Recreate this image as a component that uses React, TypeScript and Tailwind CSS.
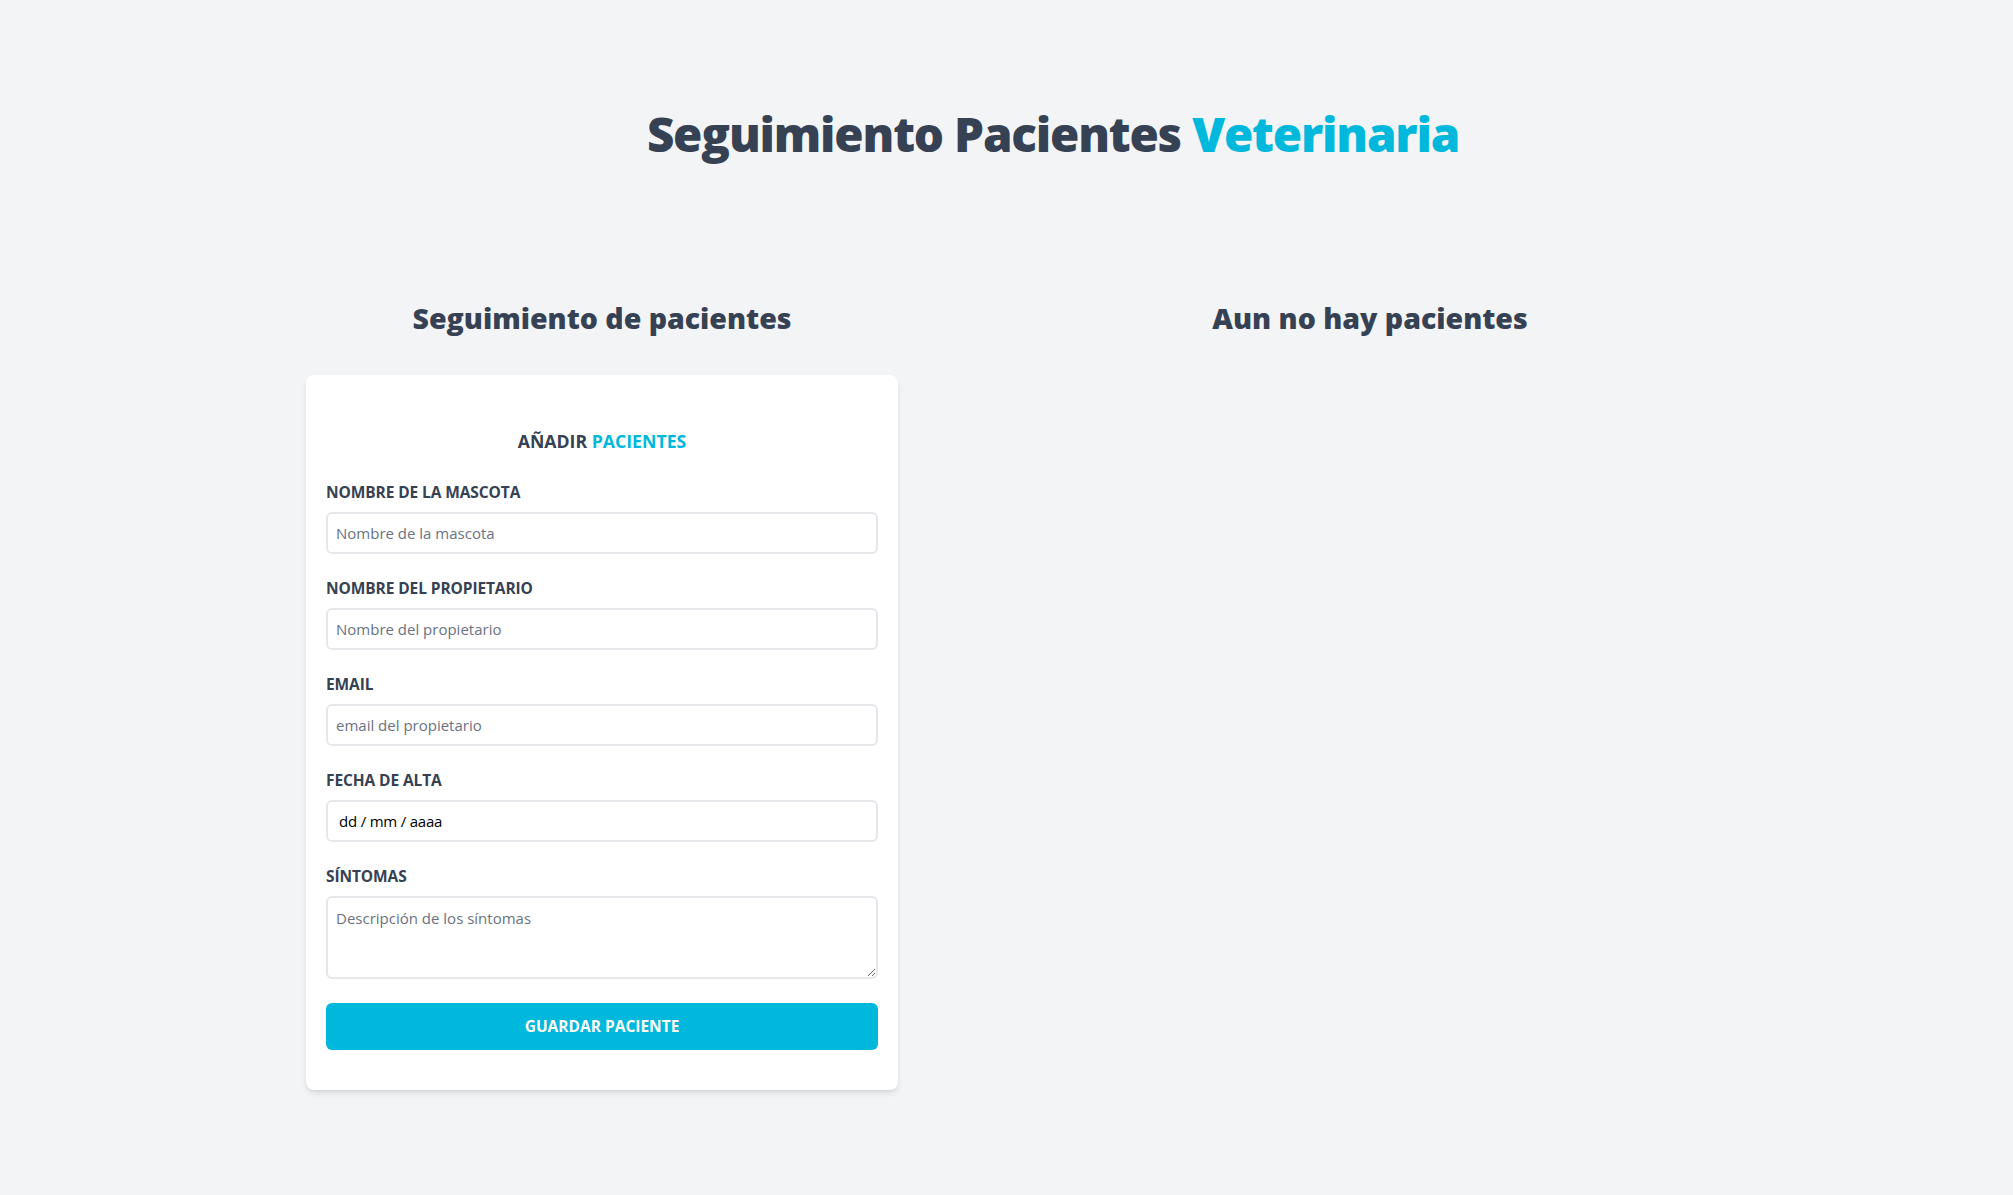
import React from "react";

const font = { fontFamily: '"Open Sans", "Noto Sans", sans-serif' };

function Field({ label, placeholder, type = "text" }: { label: string; placeholder: string; type?: string }) {
    return (
        <div className="mb-[24px]">
            <label className="block text-[15.5px] leading-[20px] font-bold uppercase text-gray-700 tracking-[-0.1px]">{label}</label>
            <input
                type={type}
                placeholder={placeholder}
                className="mt-[10px] block w-full h-[42px] border-2 border-gray-200 rounded-md px-2 text-[15px] text-gray-700 placeholder-gray-500 outline-none"
            />
        </div>
    );
}

export default function App() {
    return (
        <div className="min-h-screen w-full bg-gray-100 text-gray-700" style={font}>
            <div className="w-[1536px] ml-[306px] pt-[110px]">
                {/* Header */}
                <h1 className="pr-[42px] text-center text-[47.5px] leading-[48px] font-black tracking-tight">
                    Seguimiento Pacientes <span className="text-cyan-500">Veterinaria</span>
                </h1>

                <div className="mt-[142px] flex">
                    {/* Formulario */}
                    <div className="w-[592px]">
                        <h2 className="text-center text-[28.5px] leading-[36px] font-black">Seguimiento de pacientes</h2>

                        <form className="mt-[39px] bg-white rounded-lg shadow-md px-5 pt-10 pb-[40px]">
                            <p className="mt-[12px] mb-[27px] text-center text-[17.7px] leading-[28px] font-bold uppercase">
                                Añadir <span className="text-cyan-500">Pacientes</span>
                            </p>

                            <Field label="Nombre de la mascota" placeholder="Nombre de la mascota" />
                            <Field label="Nombre del propietario" placeholder="Nombre del propietario" />
                            <Field label="Email" placeholder="email del propietario" type="email" />

                            <div className="mb-[24px]">
                                <label className="block text-[15.5px] leading-[20px] font-bold uppercase text-gray-700 tracking-[-0.1px]">Fecha de alta</label>
                                <input
                                    type="text"
                                    placeholder="dd / mm / aaaa"
                                    className="mt-[10px] block w-full h-[42px] border-2 border-gray-200 rounded-md pl-[11px] pr-2 text-[15px] tracking-[-0.2px] text-black placeholder-black outline-none"
                                />
                            </div>

                            <div className="mb-[24px]">
                                <label className="block text-[15.5px] leading-[20px] font-bold uppercase text-gray-700 tracking-[-0.1px]">Síntomas</label>
                                <textarea
                                    placeholder="Descripción de los síntomas"
                                    className="mt-[10px] block w-full h-[83px] border-2 border-gray-200 rounded-md p-2 text-[15px] leading-[24px] text-gray-700 placeholder-gray-500 outline-none"
                                />
                            </div>

                            <button
                                type="button"
                                className="w-full h-[47px] rounded-md bg-cyan-500 text-white text-[15.5px] font-bold uppercase"
                            >
                                Guardar paciente
                            </button>
                        </form>
                    </div>

                    {/* Listado */}
                    <div className="flex-1">
                        <h2 className="text-center text-[28.5px] leading-[36px] font-black">Aun no hay pacientes</h2>
                    </div>
                </div>
            </div>
        </div>
    );
}
